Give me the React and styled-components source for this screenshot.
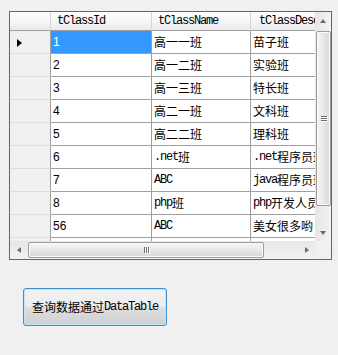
import { Fragment } from 'react'
import styled, { createGlobalStyle, css } from 'styled-components'

const GlobalStyle = createGlobalStyle`
  html, body {
    margin: 0;
    background: #f0f0f0;
  }
  body {
    font-family: "Liberation Mono", "Noto Sans CJK SC", monospace;
    font-size: 12px;
    color: #000;
  }
`

const Page = styled.div`
  width: 338px;
  height: 355px;
  box-sizing: border-box;
  padding: 11px 0 0 9px;
  display: flex;
  flex-direction: column;
  align-items: flex-start;
  gap: 28px;
`

const Frame = styled.div`
  width: 323px;
  height: 249px;
  box-sizing: border-box;
  border: 1px solid #646464;
  display: grid;
  grid-template-columns: 305px 16px;
  grid-template-rows: 229px 18px;
  background: #fff;
`

const Viewport = styled.div`
  overflow: hidden;
  background: #fff;
`

const Table = styled.div`
  display: grid;
  grid-template-columns: 41px 101px 99px 130px;
  grid-auto-rows: 23px;
  grid-template-rows: 19px;
`

const cellBase = css`
  box-sizing: border-box;
  display: flex;
  align-items: center;
  white-space: nowrap;
  overflow: hidden;
  font-size: 12px;
  letter-spacing: -1.2px;
`

const HeadCell = styled.div`
  ${cellBase}
  padding-left: ${({ $pad }) => $pad || 6}px;
  background: linear-gradient(#ffffff, #f3f4f6 60%, #e9eaec);
  border-right: 1px solid #d5d5d5;
  border-bottom: 1px solid #a0a0a0;
`

const RowHead = styled.div`
  ${cellBase}
  padding-left: 7px;
  background: #f0f0f0;
  border-right: 1px solid #a0a0a0;
  border-bottom: 1px solid #dcdcdc;
`

const Cell = styled.div`
  ${cellBase}
  padding-left: 2px;
  border-right: 1px solid #a0a0a0;
  border-bottom: 1px solid #a0a0a0;
  background: ${({ $selected }) => ($selected ? '#3399ff' : '#fff')};
  color: ${({ $selected }) => ($selected ? '#fff' : '#000')};
  ${({ $num }) =>
    $num &&
    css`
      font-family: "Liberation Sans", sans-serif;
      letter-spacing: 0;
    `}
`

const Han = styled.span`
  font-family: "Noto Sans CJK SC", sans-serif;
  font-size: 12px;
  letter-spacing: 0;
  line-height: 1;
`

const Pointer = styled.span`
  width: 0;
  height: 0;
  border-top: 4px solid transparent;
  border-bottom: 4px solid transparent;
  border-left: 5px solid #000;
  margin-top: 2px;
`

const ScrollV = styled.div`
  display: flex;
  flex-direction: column;
  background: linear-gradient(90deg, #e6e6e6, #f3f3f3);
`

const ScrollH = styled.div`
  display: flex;
  align-items: stretch;
  background: linear-gradient(#e6e6e6, #f3f3f3);
`

const Corner = styled.div`
  background: #f0f0f0;
`

const ArrowBox = styled.div`
  flex: 0 0 17px;
  display: flex;
  align-items: center;
  justify-content: center;
`

const Arrow = styled.span`
  width: 0;
  height: 0;
  ${({ $dir }) =>
    $dir === 'up'
      ? css`
          border-left: 3.5px solid transparent;
          border-right: 3.5px solid transparent;
          border-bottom: 4px solid #6a6a6a;
        `
      : $dir === 'down'
      ? css`
          border-left: 3.5px solid transparent;
          border-right: 3.5px solid transparent;
          border-top: 4px solid #6a6a6a;
        `
      : $dir === 'left'
      ? css`
          border-top: 3.5px solid transparent;
          border-bottom: 3.5px solid transparent;
          border-right: 4px solid #6a6a6a;
        `
      : css`
          border-top: 3.5px solid transparent;
          border-bottom: 3.5px solid transparent;
          border-left: 4px solid #6a6a6a;
        `}
`

const Track = styled.div`
  flex: 1;
  display: flex;
  flex-direction: ${({ $vertical }) => ($vertical ? 'column' : 'row')};
  padding: ${({ $vertical }) => ($vertical ? '2px 0 0 1px' : '1px 0 0 1px')};
`

const Thumb = styled.div`
  box-sizing: border-box;
  border: 1px solid #9b9b9b;
  border-radius: 2px;
  display: flex;
  align-items: center;
  justify-content: center;
  gap: 1px;
  flex-direction: ${({ $vertical }) => ($vertical ? 'column' : 'row')};
  ${({ $vertical }) =>
    $vertical
      ? css`
          width: 15px;
          height: 175px;
          background: linear-gradient(90deg, #f6f6f6, #e8e8e8 50%, #d6d6d6);
        `
      : css`
          width: 236px;
          height: 16px;
          background: linear-gradient(#f6f6f6, #e8e8e8 50%, #d6d6d6);
        `}
  box-shadow: inset 0 0 0 1px #fafafa;
`

const Grip = styled.span`
  background: #6e6e6e;
  box-shadow: 1px 1px 0 #fff;
  ${({ $vertical }) =>
    $vertical
      ? css`
          width: 6px;
          height: 1px;
        `
      : css`
          width: 1px;
          height: 6px;
        `}
`

const Button = styled.button`
  margin-left: 14px;
  width: 144px;
  height: 38px;
  box-sizing: border-box;
  border: 1px solid #3a8fd0;
  border-radius: 3px;
  background: linear-gradient(#f3f3f3 0%, #ececec 48%, #dedede 52%, #d0d0d0 100%);
  box-shadow: inset 0 0 0 1px #bfe5f8;
  padding: 0;
  display: flex;
  align-items: center;
  justify-content: center;
  font-family: "Liberation Mono", "Noto Sans CJK SC", monospace;
  font-size: 12px;
  letter-spacing: -1.2px;
  color: #000;
`

const columns = ['tClassId', 'tClassName', 'tClassDesc']

const rows = [
  ['1', '高一一班', '苗子班'],
  ['2', '高一二班', '实验班'],
  ['3', '高一三班', '特长班'],
  ['4', '高二一班', '文科班'],
  ['5', '高二二班', '理科班'],
  ['6', '.net班', '.net程序员班'],
  ['7', 'ABC', 'java程序员班'],
  ['8', 'php班', 'php开发人员'],
  ['56', 'ABC', '美女很多哟'],
  ['', '', ''],
]

// CJK runs get their own span so latin stays at SimSun-like width
const mixed = (text) =>
  text.split(/([\u4e00-\u9fff]+)/).map((part, i) =>
    /[\u4e00-\u9fff]/.test(part) ? <Han key={i}>{part}</Han> : part
  )

const Grips = ({ vertical }) => (
  <>
    <Grip $vertical={vertical} />
    <Grip $vertical={vertical} />
    <Grip $vertical={vertical} />
  </>
)

const App = () => {
  return (
    <Page>
      <GlobalStyle />
      <Frame>
        <Viewport>
          <Table>
            <HeadCell />
            {columns.map((c, i) => (
              <HeadCell key={c} $pad={i === 2 ? 8 : 6}>
                {c}
              </HeadCell>
            ))}
            {rows.map((r, i) => (
              <Fragment key={i}>
                <RowHead>{i === 0 && <Pointer />}</RowHead>
                <Cell $num $selected={i === 0}>
                  {r[0]}
                </Cell>
                <Cell>{mixed(r[1])}</Cell>
                <Cell>{mixed(r[2])}</Cell>
              </Fragment>
            ))}
          </Table>
        </Viewport>
        <ScrollV>
          <ArrowBox>
            <Arrow $dir="up" />
          </ArrowBox>
          <Track $vertical>
            <Thumb $vertical>
              <Grips vertical />
            </Thumb>
          </Track>
          <ArrowBox>
            <Arrow $dir="down" />
          </ArrowBox>
        </ScrollV>
        <ScrollH>
          <ArrowBox>
            <Arrow $dir="left" />
          </ArrowBox>
          <Track>
            <Thumb>
              <Grips />
            </Thumb>
          </Track>
          <ArrowBox>
            <Arrow $dir="right" />
          </ArrowBox>
        </ScrollH>
        <Corner />
      </Frame>
      <Button>{mixed('查询数据通过DataTable')}</Button>
    </Page>
  )
}

export default App
